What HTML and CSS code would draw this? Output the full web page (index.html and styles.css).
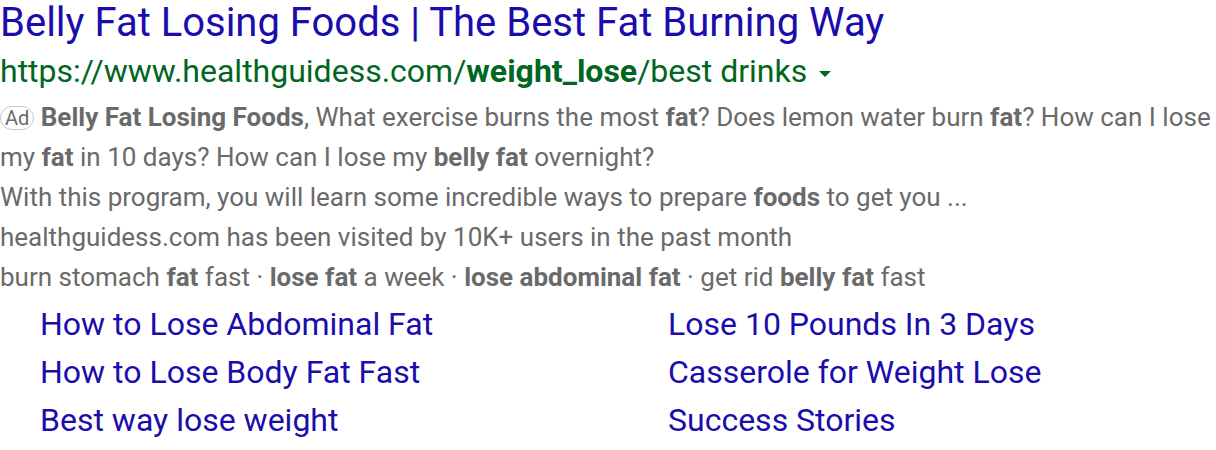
FILE: index.html
```html
<!DOCTYPE html>
<html>
<head>
<meta charset="utf-8">
<link rel="stylesheet" href="styles.css">
</head>
<body>
<div class="ad">
  <h1 class="title">Belly Fat Losing Foods | The Best Fat Burning Way</h1>
  <div class="url">https://www.healthguidess.com/<b>weight_lose</b>/best drinks <span class="arrow"></span></div>
  <div class="desc">
    <p><span class="badge">Ad</span> <b>Belly Fat Losing Foods</b>, What exercise burns the most <b>fat</b>? Does lemon water burn <b>fat</b>? How can I lose my <b>fat</b> in 10 days? How can I lose my <b>belly fat</b> overnight?</p>
    <p>With this program, you will learn some incredible ways to prepare <b>foods</b> to get you ...</p>
    <p>healthguidess.com has been visited by 10K+ users in the past month</p>
    <p>burn stomach <b>fat</b> fast · <b>lose fat</b> a week · <b>lose abdominal fat</b> · get rid <b>belly fat</b> fast</p>
  </div>
  <div class="sitelinks">
    <a href="#">How to Lose Abdominal Fat</a>
    <a href="#">Lose 10 Pounds In 3 Days</a>
    <a href="#">How to Lose Body Fat Fast</a>
    <a href="#">Casserole for Weight Lose</a>
    <a href="#">Best way lose weight</a>
    <a href="#">Success Stories</a>
  </div>
</div>
</body>
</html>
```

FILE: styles.css
```css
html, body {
  margin: 0;
  padding: 0;
  background: #fff;
}
body {
  font-family: Roboto, "Liberation Sans", Arial, sans-serif;
}
.ad {
  width: 1216px;
}
.title {
  margin: 0;
  font-weight: 400;
  font-size: 40px;
  line-height: 46px;
  color: #1a0dab;
  white-space: nowrap;
}
.url {
  font-size: 32px;
  line-height: 51px;
  color: #006621;
  white-space: nowrap;
}
.url b {
  font-weight: 700;
}
.arrow {
  display: inline-block;
  width: 0;
  height: 0;
  margin-left: 4px;
  border-left: 6px solid transparent;
  border-right: 6px solid transparent;
  border-top: 6px solid #006621;
  vertical-align: middle;
}
.desc {
  font-size: 26px;
  line-height: 40px;
  color: #6a6a6a;
}
.desc p {
  margin: 0;
}
.desc b {
  font-weight: 700;
}
.badge {
  display: inline-block;
  border: 1px solid #c6c6c6;
  border-radius: 12px;
  font-size: 20px;
  line-height: 22px;
  padding: 0 4px;
  color: #6a6a6a;
  vertical-align: 1px;
}
.sitelinks {
  display: grid;
  grid-template-columns: 628px 1fr;
  padding-left: 40px;
  margin-top: 3px;
}
.sitelinks a {
  font-size: 32px;
  line-height: 48px;
  color: #1a0dab;
  text-decoration: none;
  white-space: nowrap;
}
```
